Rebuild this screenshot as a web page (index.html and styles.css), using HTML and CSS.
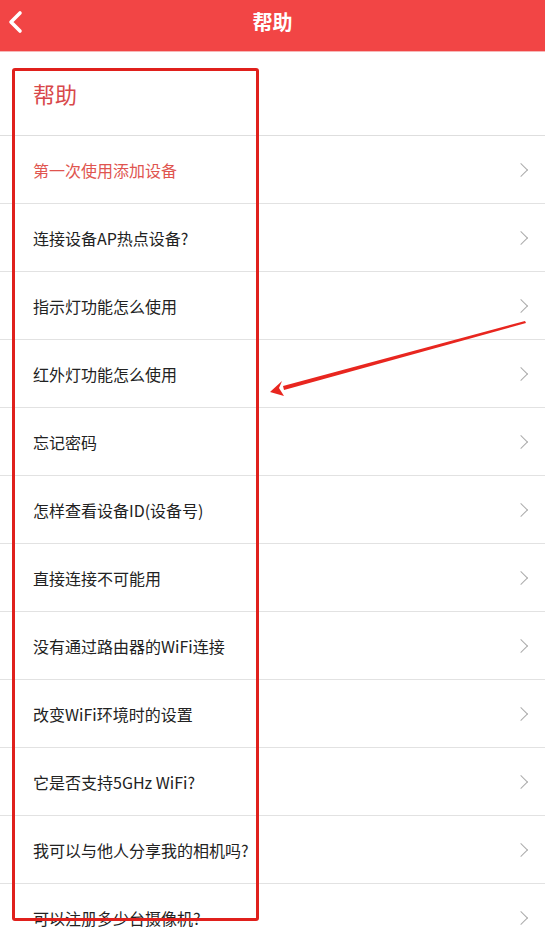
FILE: index.html
```html
<!DOCTYPE html>
<html lang="zh">
<head>
<meta charset="utf-8">
<title>帮助</title>
<link rel="stylesheet" href="styles.css">
</head>
<body>
<div class="app">
  <header class="topbar">
    <svg class="back" width="16" height="24" viewBox="0 0 16 24"><path d="M13 3 L4 12 L13 21" fill="none" stroke="#fff" stroke-width="3.6" stroke-linecap="round" stroke-linejoin="round"/></svg>
    <h1 class="title">帮助</h1>
  </header>
  <div class="section-head">帮助</div>
  <ul class="list">
    <li class="row active"><span>第一次使用添加设备</span><i class="chev"></i></li>
    <li class="row"><span>连接设备AP热点设备?</span><i class="chev"></i></li>
    <li class="row"><span>指示灯功能怎么使用</span><i class="chev"></i></li>
    <li class="row"><span>红外灯功能怎么使用</span><i class="chev"></i></li>
    <li class="row"><span>忘记密码</span><i class="chev"></i></li>
    <li class="row"><span>怎样查看设备ID(设备号)</span><i class="chev"></i></li>
    <li class="row"><span>直接连接不可能用</span><i class="chev"></i></li>
    <li class="row"><span>没有通过路由器的WiFi连接</span><i class="chev"></i></li>
    <li class="row"><span>改变WiFi环境时的设置</span><i class="chev"></i></li>
    <li class="row"><span>它是否支持5GHz WiFi?</span><i class="chev"></i></li>
    <li class="row"><span>我可以与他人分享我的相机吗?</span><i class="chev"></i></li>
    <li class="row"><span>可以注册多少台摄像机?</span><i class="chev"></i></li>
  </ul>
  <div class="highlight"></div>
  <svg class="arrow" width="545" height="946" viewBox="0 0 545 946">
    <polygon points="525,321 526,323 284,390 283,386" fill="#e8261f"/>
    <polygon points="270,392 282,381 279,388 284,396" fill="#e8261f"/>
  </svg>
</div>
</body>
</html>
```

FILE: styles.css
```css
* { box-sizing: border-box; }
html, body { margin: 0; padding: 0; }
body {
  background: #fff;
  font-family: "Noto Sans CJK SC", "Noto Sans", sans-serif;
  overflow: hidden;
}
.app {
  position: relative;
  width: 545px;
  height: 946px;
  overflow: hidden;
}
.topbar {
  height: 52px;
  background: #f24545;
  border-bottom: 1px solid #f6b8b8;
  display: flex;
  align-items: center;
  justify-content: center;
  position: relative;
}
.back {
  position: absolute;
  left: 7px;
  top: 10px;
}
.title {
  margin: 0;
  color: #fff;
  font-size: 20px;
  font-weight: 700;
  line-height: 1;
  margin-top: -8px;
}
.section-head {
  height: 84px;
  padding: 26px 0 0 33px;
  color: #d8484a;
  font-size: 22px;
  line-height: 30px;
  border-bottom: 1px solid #dedede;
}
.list {
  list-style: none;
  margin: 0;
  padding: 0;
}
.row {
  height: 68px;
  display: flex;
  align-items: center;
  justify-content: space-between;
  padding: 0 16px 0 33px;
  border-bottom: 1px solid #e2e2e2;
  font-size: 16px;
  color: #222;
}
.row.active { color: #e0554f; }
.chev {
  width: 10px;
  height: 10px;
  border-top: 1.6px solid #acacac;
  border-right: 1.6px solid #acacac;
  transform: rotate(45deg);
  margin-right: 3px;
}
.highlight {
  position: absolute;
  left: 12px;
  top: 68px;
  width: 247px;
  height: 853px;
  border: 3px solid #e0201c;
  border-radius: 3px;
  pointer-events: none;
}
.arrow {
  position: absolute;
  left: 0;
  top: 0;
  pointer-events: none;
}
```
